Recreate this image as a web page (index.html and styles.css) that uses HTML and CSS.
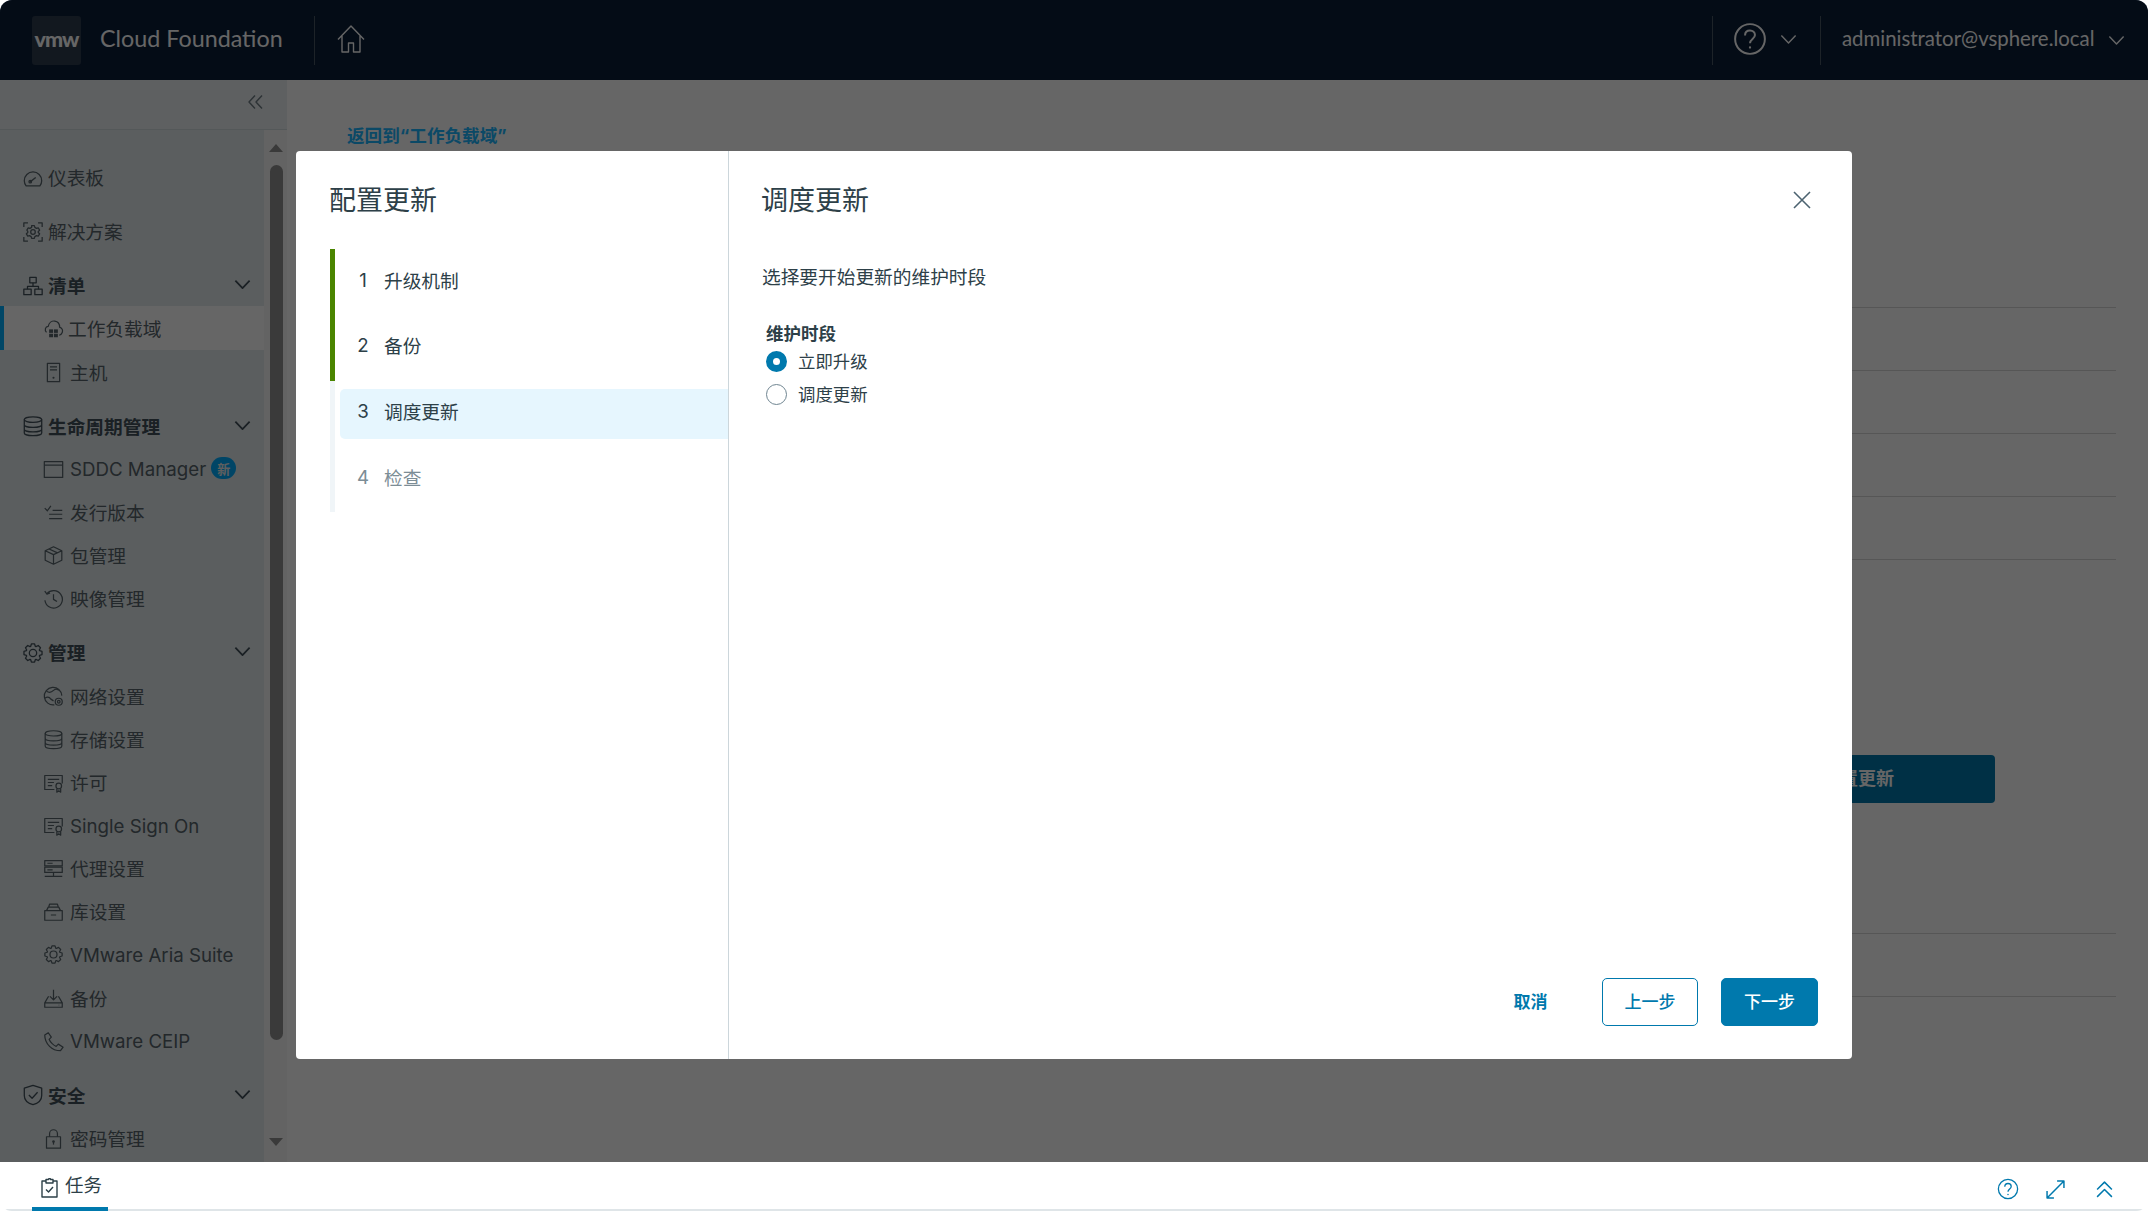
FILE: index.html
```html
<!DOCTYPE html>
<html lang="zh-CN">
<head>
    <meta charset="UTF-8">
    <meta name="viewport" content="width=device-width, initial-scale=1.0">
    <title>VMware Cloud Foundation</title>
    <link rel="stylesheet" href="styles.css">
</head>
<body>
    <svg class="icon-defs" xmlns="http://www.w3.org/2000/svg">
        <symbol id="i-gear" viewBox="0 0 24 24">
            <polygon points="19.14,9.4 21.85,10.26 21.85,13.74 19.14,14.6 18.89,15.21 20.19,17.74 17.74,20.19 15.21,18.89 14.6,19.14 13.74,21.85 10.26,21.85 9.4,19.14 8.79,18.89 6.26,20.19 3.81,17.74 5.11,15.21 4.86,14.6 2.15,13.74 2.15,10.26 4.86,9.4 5.11,8.79 3.81,6.26 6.26,3.81 8.79,5.11 9.4,4.86 10.26,2.15 13.74,2.15 14.6,4.86 15.21,5.11 17.74,3.81 20.19,6.26 18.89,8.79"/>
            <circle cx="12" cy="12" r="4"/>
        </symbol>
        <symbol id="i-gauge" viewBox="0 0 24 24">
            <path d="M4.5 20.5h15c1.2-1.6 2-3.6 2-5.6a9.5 9.5 0 0 0-19 0c0 2 .8 4 2 5.6z"/>
            <path d="M8.5 16.5l6.5-5"/>
            <circle cx="9" cy="16" r="1.4"/>
        </symbol>
        <symbol id="i-solution" viewBox="0 0 24 24">
            <path d="M2 6.5V2h4.5M17.5 2H22v4.5M22 17.5V22h-4.500M6.500 22H2v-4.500"/>
            <path d="M10.500 5h3l.5 2 1.800 1 1.900-.6 1.500 2.600-1.500 1.400v1.200l1.500 1.400-1.500 2.600-1.900-.6-1.800 1-.5 2h-3l-.5-2-1.800-1-1.900.6-1.500-2.600 1.500-1.400v-1.200L5.300 10l1.500-2.600 1.900.6 1.800-1z"/>
            <circle cx="12" cy="12" r="2.500"/>
        </symbol>
        <symbol id="i-tree" viewBox="0 0 24 24">
            <rect x="8.500" y="2.500" width="7" height="6"/>
            <rect x="2" y="15.500" width="8" height="6"/>
            <rect x="14" y="15.500" width="8" height="6"/>
            <path d="M12 8.500v4M6 15.500v-3h12v3"/>
        </symbol>
        <symbol id="i-cloud" viewBox="0 0 24 24">
            <path d="M4 16.500C1.500 14 2.500 9.800 6 9.500 6.800 5.500 10 3 13.500 3.500c3.500.5 5.500 3.500 5.500 7 2.800.8 4 3.500 3 6-.6 1.600-1.800 2.800-3.500 3.200"/>
            <rect class="fill" x="7" y="13" width="4.500" height="4"/>
            <rect class="fill" x="12.500" y="13" width="4.500" height="4"/>
            <rect class="fill" x="7" y="18" width="4.500" height="4"/>
            <rect class="fill" x="12.500" y="18" width="4.500" height="4"/>
        </symbol>
        <symbol id="i-host" viewBox="0 0 24 24">
            <rect x="5" y="1.500" width="14" height="21"/>
            <path d="M8 5.500h8M8 9h8"/>
            <circle class="fill" cx="12" cy="18" r="1.200"/>
        </symbol>
        <symbol id="i-db" viewBox="0 0 24 24">
            <ellipse cx="12" cy="5" rx="9.500" ry="3"/>
            <path d="M2.500 5v14.500c0 1.700 4.300 3 9.500 3s9.500-1.300 9.500-3V5M2.500 10.500c0 1.700 4.300 3 9.500 3s9.500-1.300 9.500-3M2.500 15.500c0 1.700 4.300 3 9.500 3s9.500-1.300 9.500-3"/>
        </symbol>
        <symbol id="i-window" viewBox="0 0 24 24">
            <rect x="1.500" y="3" width="21" height="18"/>
            <path d="M1.500 7h21"/>
        </symbol>
        <symbol id="i-list" viewBox="0 0 24 24">
            <path d="M2 7l3 3 4-5.500M11 9.500h11M7 14h15M7 19h15"/>
        </symbol>
        <symbol id="i-box" viewBox="0 0 24 24">
            <path d="M12 2l9.500 4.500v11L12 22l-9.500-4.500v-11zM2.500 6.500L12 11l9.500-4.500M12 11v11M7 4.500l9.500 4.500"/>
        </symbol>
        <symbol id="i-history" viewBox="0 0 24 24">
            <path d="M4.500 6.500a10 10 0 1 1-2.300 7.500"/>
            <path d="M2 3.500l2.500 3.500 3.500-1.500M12 7v6l4 2.500"/>
        </symbol>
        <symbol id="i-net" viewBox="0 0 24 24">
            <path d="M13 21.500A10 10 0 1 1 21.500 11"/>
            <path d="M4 6c3 2 6 1 8-1s4-2 6 0M2 14c3-2 5-2 7 1l3 2"/>
            <circle cx="18" cy="18" r="4"/>
            <circle cx="18" cy="18" r="1.500"/>
        </symbol>
        <symbol id="i-license" viewBox="0 0 24 24">
            <path d="M13 20H2V4h20v9"/>
            <path d="M5.500 8.500h13M5.500 12h7M5.500 15.500h5"/>
            <circle cx="18" cy="16" r="3.200"/>
            <path d="M15.800 19v4l2.200-1.500 2.200 1.500v-4"/>
        </symbol>
        <symbol id="i-proxy" viewBox="0 0 24 24">
            <rect x="2" y="3" width="20" height="6"/>
            <rect x="2" y="10.500" width="20" height="6"/>
            <path d="M12 16.500v5M2 21h20M5 6h6M5 13.500h6"/>
        </symbol>
        <symbol id="i-shelf" viewBox="0 0 24 24">
            <rect x="2" y="11" width="20" height="11"/>
            <path d="M4 11l2-4h12l2 4M6.500 7l1-3.500h9l1 3.500M9 16h6"/>
        </symbol>
        <symbol id="i-backup" viewBox="0 0 24 24">
            <path d="M7 10H6l-4 7v5h20v-5l-4-7h-1M2 17h20M12 2v11M8 9.500l4 4 4-4M18 19.500h.5"/>
        </symbol>
        <symbol id="i-phone" viewBox="0 0 24 24">
            <path d="M6 2L2 4.500c0 5 2 9.500 5.500 13S16.500 22.500 20 22.500l3-4-5.500-3.500-2.500 2.500c-2-.5-3-1.500-4.500-3S7.500 11 7 9.500L9.500 7z"/>
        </symbol>
        <symbol id="i-shield" viewBox="0 0 24 24">
            <path d="M12 1.500l9.500 3v8c0 5-4 8.500-9.500 10-5.500-1.500-9.500-5-9.500-10v-8z"/>
            <path d="M7.500 12l3.500 3.500 6-6.500"/>
        </symbol>
        <symbol id="i-lock" viewBox="0 0 24 24">
            <rect x="4" y="10" width="16" height="13"/>
            <path d="M7.500 10V6.500a4.500 4.500 0 0 1 9 0V10"/>
            <circle class="fill" cx="12" cy="15.500" r="1.500"/>
            <path d="M12 16v3"/>
        </symbol>
        <symbol id="i-help" viewBox="0 0 24 24">
            <circle cx="12" cy="12" r="10.500"/>
            <path d="M8.500 9.500c0-2.200 1.500-3.500 3.500-3.500s3.500 1.300 3.500 3.200c0 2.800-3.500 2.800-3.500 5.800"/>
            <circle class="fill" cx="12" cy="18" r=".8"/>
        </symbol>
        <symbol id="i-down" viewBox="0 0 24 24">
            <path d="M3 7l9 9.500L21 7"/>
        </symbol>
    </svg>

    <div class="app">
        <header class="topbar">
            <div class="logo">vmw</div>
            <div class="product">Cloud Foundation</div>
            <div class="top-sep"></div>
            <svg class="home-icon" viewBox="0 0 28 28"><path d="M1 14.500L14 1l13 13.500M5 11v16h6.500v-9h5v9H23V11"/></svg>
            <div class="top-right">
                <div class="top-sep"></div>
                <div class="help-menu">
                    <svg class="top-help"><use href="#i-help"/></svg>
                    <svg class="top-chevron"><use href="#i-down"/></svg>
                </div>
                <div class="top-sep"></div>
                <div class="user-menu">
                    <span class="user-name">administrator@vsphere.local</span>
                    <svg class="top-chevron"><use href="#i-down"/></svg>
                </div>
            </div>
        </header>

        <div class="middle">
            <aside class="sidebar">
                <div class="collapse-row">
                    <svg class="collapse-icon" viewBox="0 0 15 14"><path d="M7 .5L1 7l6 6.500M14 .5L8 7l6 6.500"/></svg>
                </div>
                <div class="side-scroll">
                    <nav class="nav">
                        <a class="nav-item top"><svg class="nav-icon"><use href="#i-gauge"/></svg>仪表板</a>
                        <a class="nav-item top"><svg class="nav-icon"><use href="#i-solution"/></svg>解决方案</a>

                        <a class="nav-item top group"><svg class="nav-icon"><use href="#i-tree"/></svg>清单<svg class="nav-chevron"><use href="#i-down"/></svg></a>
                        <a class="nav-item sub active"><svg class="nav-icon"><use href="#i-cloud"/></svg>工作负载域</a>
                        <a class="nav-item sub"><svg class="nav-icon"><use href="#i-host"/></svg>主机</a>

                        <a class="nav-item top group"><svg class="nav-icon"><use href="#i-db"/></svg>生命周期管理<svg class="nav-chevron"><use href="#i-down"/></svg></a>
                        <a class="nav-item sub"><svg class="nav-icon"><use href="#i-window"/></svg><span class="latin">SDDC Manager</span><span class="badge">新</span></a>
                        <a class="nav-item sub"><svg class="nav-icon"><use href="#i-list"/></svg>发行版本</a>
                        <a class="nav-item sub"><svg class="nav-icon"><use href="#i-box"/></svg>包管理</a>
                        <a class="nav-item sub"><svg class="nav-icon"><use href="#i-history"/></svg>映像管理</a>

                        <a class="nav-item top group"><svg class="nav-icon"><use href="#i-gear"/></svg>管理<svg class="nav-chevron"><use href="#i-down"/></svg></a>
                        <a class="nav-item sub"><svg class="nav-icon"><use href="#i-net"/></svg>网络设置</a>
                        <a class="nav-item sub"><svg class="nav-icon"><use href="#i-db"/></svg>存储设置</a>
                        <a class="nav-item sub"><svg class="nav-icon"><use href="#i-license"/></svg>许可</a>
                        <a class="nav-item sub"><svg class="nav-icon"><use href="#i-license"/></svg><span class="latin">Single Sign On</span></a>
                        <a class="nav-item sub"><svg class="nav-icon"><use href="#i-proxy"/></svg>代理设置</a>
                        <a class="nav-item sub"><svg class="nav-icon"><use href="#i-shelf"/></svg>库设置</a>
                        <a class="nav-item sub"><svg class="nav-icon"><use href="#i-gear"/></svg><span class="latin">VMware Aria Suite</span></a>
                        <a class="nav-item sub"><svg class="nav-icon"><use href="#i-backup"/></svg>备份</a>
                        <a class="nav-item sub"><svg class="nav-icon"><use href="#i-phone"/></svg><span class="latin">VMware CEIP</span></a>

                        <a class="nav-item top group"><svg class="nav-icon"><use href="#i-shield"/></svg>安全<svg class="nav-chevron"><use href="#i-down"/></svg></a>
                        <a class="nav-item sub"><svg class="nav-icon"><use href="#i-lock"/></svg>密码管理</a>
                    </nav>
                    <div class="scrollbar">
                        <div class="arrow-up"></div>
                        <div class="thumb"></div>
                        <div class="arrow-down"></div>
                    </div>
                </div>
            </aside>

            <main class="content">
                <a class="back-link">返回到“工作负载域”</a>
                <div class="rows">
                    <div class="row"></div>
                    <div class="row"></div>
                    <div class="row"></div>
                    <div class="row"></div>
                    <div class="row"></div>
                </div>
                <div class="config-btn">配置更新</div>
                <div class="rows lower">
                    <div class="row"></div>
                    <div class="row"></div>
                </div>
            </main>
        </div>

        <footer class="taskbar">
            <div class="task-tab">
                <svg class="task-icon" viewBox="0 0 17 20"><path d="M5 3H1v16h15V3h-4M5 1.500h2.500a1 1 0 0 1 2 0H12V5H5zM5 11.500l2.500 2.500 4.500-5"/></svg>
                任务
            </div>
            <div class="task-actions">
                <svg class="task-help"><use href="#i-help"/></svg>
                <svg class="task-action" viewBox="0 0 18 18"><path d="M1 17L17 1M10.500 1H17v6.500M1 10.500V17h6.500"/></svg>
                <svg class="task-action" viewBox="0 0 18 18"><path d="M2 9l7-7 7 7M2 16l7-7 7 7"/></svg>
            </div>
        </footer>

        <div class="overlay">
            <div class="modal">
                <div class="wizard-nav">
                    <h2 class="wizard-title">配置更新</h2>
                    <ol class="steps">
                        <li class="step done"><div class="step-box"><span class="step-num">1</span>升级机制</div></li>
                        <li class="step done"><div class="step-box"><span class="step-num">2</span>备份</div></li>
                        <li class="step current"><div class="step-box"><span class="step-num">3</span>调度更新</div></li>
                        <li class="step todo"><div class="step-box"><span class="step-num">4</span>检查</div></li>
                    </ol>
                </div>
                <div class="wizard-page">
                    <div class="page-head">
                        <h2 class="wizard-title">调度更新</h2>
                        <svg class="close-icon" viewBox="0 0 18 18"><path d="M1 1l16 16M17 1L1 17"/></svg>
                    </div>
                    <p class="page-desc">选择要开始更新的维护时段</p>
                    <div class="field">
                        <div class="field-label">维护时段</div>
                        <label class="radio"><span class="radio-dot checked"></span>立即升级</label>
                        <label class="radio"><span class="radio-dot"></span>调度更新</label>
                    </div>
                    <div class="page-actions">
                        <button class="btn btn-link">取消</button>
                        <button class="btn btn-outline">上一步</button>
                        <button class="btn btn-primary">下一步</button>
                    </div>
                </div>
            </div>
        </div>
    </div>
</body>
</html>
```

FILE: styles.css
```css
html, body {
    margin: 0;
    padding: 0;
    height: 100%;
    background-color: #fff;
}
body {
    font-family: Inter, "Noto Sans CJK SC", sans-serif;
    font-size: 18.7px;
    color: #2d4048;
}
.icon-defs {
    position: absolute;
    width: 0;
    height: 0;
}
symbol {
    overflow: visible;
}
svg {
    fill: none;
    stroke: currentColor;
    stroke-width: 1.4;
    stroke-linejoin: round;
}
.fill {
    fill: currentColor;
    stroke: none;
}
.app {
    position: relative;
    height: 1211px;
    display: flex;
    flex-direction: column;
    border-radius: 12px;
    overflow: hidden;
    background-color: #fff;
}

/* top bar */
.topbar {
    height: 80px;
    flex-shrink: 0;
    display: flex;
    align-items: center;
    padding-left: 32px;
    background-color: #0a1e37;
    color: #fff;
    box-sizing: border-box;
}
.logo {
    width: 49px;
    height: 49px;
    box-sizing: border-box;
    padding-bottom: 3px;
    display: flex;
    align-items: center;
    justify-content: center;
    background-color: #2d3c4e;
    border-radius: 3px;
    font-family: Lato, sans-serif;
    font-weight: 900;
    font-size: 21.5px;
    letter-spacing: -1px;
}
.product {
    margin-left: 19px;
    width: 214px;
    padding-bottom: 4px;
    font-family: Lato, sans-serif;
    font-size: 23.3px;
}
.top-sep {
    width: 1px;
    height: 49px;
    background-color: #4a5765;
}
.home-icon {
    width: 28px;
    height: 28px;
    margin-left: 22px;
    margin-bottom: 2px;
}
.top-right {
    margin-left: auto;
    display: flex;
    align-items: center;
}
.help-menu {
    width: 107px;
    display: flex;
    align-items: center;
    box-sizing: border-box;
    padding-left: 20px;
    padding-bottom: 2px;
}
.top-help {
    width: 34px;
    height: 34px;
}
.top-chevron {
    width: 19px;
    height: 19px;
    margin-left: 12px;
    stroke-width: 1.8;
}
.user-menu {
    display: flex;
    align-items: center;
    padding-left: 21px;
    padding-right: 22px;
    font-family: Lato, sans-serif;
    font-size: 20.4px;
}
.user-name {
    padding-bottom: 4px;
    margin-right: .5px;
}

/* side nav */
.middle {
    flex: 1;
    display: flex;
    min-height: 0;
}
.sidebar {
    width: 287px;
    flex-shrink: 0;
    display: flex;
    flex-direction: column;
    background-color: #e3ebed;
}
.collapse-row {
    height: 50px;
    box-sizing: border-box;
    flex-shrink: 0;
    display: flex;
    justify-content: flex-end;
    padding: 15px 24px 0 0;
    background-color: #eaf0f2;
    border-bottom: 1px solid #d3dbde;
}
.collapse-icon {
    width: 15px;
    height: 14px;
    color: #6f7d85;
}
.side-scroll {
    flex: 1;
    display: flex;
    min-height: 0;
}
.nav {
    width: 264px;
    padding-top: 25px;
    overflow: hidden;
    color: #57646b;
}
.nav-item {
    height: 43.15px;
    display: flex;
    align-items: center;
    white-space: nowrap;
    position: relative;
}
.nav-item.top {
    padding-left: 22px;
}
.nav-item.top + .nav-item.top {
    margin-top: 11px;
}
.nav-item.group {
    font-weight: 700;
    color: #42505a;
}
.nav-item.sub + .nav-item.top {
    margin-top: 11px;
}
.nav-item.sub {
    padding-left: 43px;
}
.nav-item.active {
    background-color: #fff;
    box-shadow: inset 4px 0 0 #00aeff;
}
.nav-icon {
    width: 21px;
    height: 21px;
    flex-shrink: 0;
    margin: 2px 6px 0 0;
}
.nav-item.active .nav-icon {
    margin-right: 4px;
}
.nav-item.top .nav-icon {
    width: 22px;
    height: 22px;
    margin-right: 4px;
}
.nav-item .nav-chevron {
    width: 19px;
    height: 19px;
    position: absolute;
    right: 12.5px;
    top: 12px;
    margin: 0;
    stroke-width: 2.2;
}
.latin {
    margin-top: 3px;
}
.badge {
    width: 25px;
    height: 22px;
    margin-left: 5px;
    border-radius: 11px;
    display: flex;
    align-items: center;
    justify-content: center;
    font-size: 13px;
    font-weight: 700;
    color: #eee;
    background-color: #00adff;
}
.scrollbar {
    flex: 1;
    display: flex;
    flex-direction: column;
    align-items: center;
    padding-top: 14px;
    padding-left: 1px;
    background-color: #f8f8f8;
}
.arrow-up, .arrow-down {
    width: 0;
    height: 0;
    border-left: 7.5px solid transparent;
    border-right: 7.5px solid transparent;
}
.arrow-up {
    border-bottom: 8px solid #929292;
}
.arrow-down {
    border-top: 8px solid #929292;
    margin-top: 98px;
}
.thumb {
    width: 13px;
    height: 875px;
    margin-top: 13px;
    border-radius: 7px;
    background-color: #929292;
}

/* page behind the modal */
.content {
    flex: 1;
    padding: 44px 32px 0 60px;
}
.back-link {
    display: block;
    height: 24px;
    line-height: 24px;
    font-size: 17.6px;
    font-weight: 700;
    color: #1cb6ff;
}
.rows {
    margin-top: 97px;
}
.rows.lower {
    margin-top: 68px;
}
.row {
    height: 63px;
    box-sizing: border-box;
    border-bottom: 1px solid #d7d7d7;
}
.config-btn {
    width: 274px;
    height: 48px;
    line-height: 48px;
    margin: 195px 121px 0 auto;
    text-align: center;
    font-size: 18px;
    font-weight: 700;
    color: #fff;
    background-color: #0079ad;
    border-radius: 4px;
}

/* bottom task bar */
.taskbar {
    height: 49px;
    flex-shrink: 0;
    box-sizing: border-box;
    display: flex;
    justify-content: space-between;
    padding-left: 32px;
    background-color: #fff;
    border-bottom: 2px solid #dfe5e8;
}
.task-tab {
    width: 76px;
    height: 49px;
    box-sizing: border-box;
    display: flex;
    align-items: flex-start;
    padding: 9px 0 0 9px;
    border-bottom: 4px solid #0079ad;
    line-height: 28px;
    color: #2d4048;
    font-size: 18.5px;
}
.task-icon {
    width: 17px;
    height: 20px;
    margin: 7px 7px 0 0;
}
.task-actions {
    display: flex;
    align-items: center;
    color: #0079ad;
    padding: 7px 34px 0 0;
    gap: 30px;
}
.task-help {
    width: 22px;
    height: 22px;
    margin-right: -3px;
}
.task-action {
    width: 19px;
    height: 19px;
}

/* wizard modal */
.overlay {
    position: absolute;
    top: 0;
    left: 0;
    right: 0;
    bottom: 49px;
    box-sizing: border-box;
    padding: 151px 296px 103px;
    background-color: rgba(0, 0, 0, 0.6);
    display: flex;
}
.modal {
    flex: 1;
    display: flex;
    background-color: #fff;
    border-radius: 4px;
}
.wizard-nav {
    width: 433px;
    flex-shrink: 0;
    box-sizing: border-box;
    padding: 32px 0 0 34px;
    border-right: 1px solid #ccd6db;
}
.wizard-title {
    margin: 0 0 0 -1px;
    font-size: 27px;
    font-weight: 400;
    line-height: 36px;
    color: #2d4048;
}
.steps {
    list-style: none;
    margin: 30px 0 0;
    padding: 0;
}
.step {
    height: 65.75px;
    box-sizing: border-box;
    padding: 8px 0 0 5px;
    border-left: 5px solid #f0f5f8;
}
.step.done {
    border-left-color: #4a8500;
}
.step-box {
    height: 50px;
    display: flex;
    align-items: center;
    padding-left: 17px;
    padding-bottom: 6px;
    box-sizing: border-box;
    border-radius: 5px 0 0 5px;
}
.step.current .step-box {
    background-color: #e6f6fe;
}
.step.todo {
    color: #7c8d96;
}
.step-num {
    width: 12px;
    margin-right: 15px;
    margin-top: 2px;
    text-align: center;
}
.wizard-page {
    flex: 1;
    display: flex;
    flex-direction: column;
    padding: 32px 34px 33px 33px;
}
.page-head {
    display: flex;
    justify-content: space-between;
    align-items: center;
}
.close-icon {
    width: 18px;
    height: 18px;
    margin-right: 7px;
    margin-bottom: 2px;
    color: #4c6370;
    stroke-width: 1.6;
}
.page-desc {
    margin: 46px 0 0;
    line-height: 26px;
}
.field {
    margin: 31px 0 0 4px;
}
.field-label {
    font-size: 17.5px;
    font-weight: 700;
    line-height: 23px;
}
.radio {
    display: flex;
    align-items: center;
    height: 33px;
    box-sizing: border-box;
    padding-bottom: 3px;
    font-size: 17.4px;
}
.radio-dot {
    width: 21px;
    height: 21px;
    box-sizing: border-box;
    margin-right: 11px;
    margin-top: 3px;
    border: 1px solid #6f8591;
    border-radius: 50%;
}
.radio-dot.checked {
    border: 7.5px solid #0079ad;
}
.page-actions {
    margin-top: auto;
    display: flex;
    justify-content: flex-end;
    gap: 23px;
}
.btn {
    width: 97px;
    height: 48px;
    box-sizing: border-box;
    padding: 0 0 4px;
    border-radius: 5px;
    font-family: inherit;
    font-size: 17px;
    font-weight: 500;
    border: 1px solid #0079ad;
    color: #0079ad;
    background-color: #fff;
}
.btn-outline {
    width: 96px;
}
.btn-link {
    width: 87px;
    margin-right: 5px;
    border: none;
    font-weight: 700;
}
.btn-primary {
    color: #fff;
    background-color: #0079ad;
}
```
